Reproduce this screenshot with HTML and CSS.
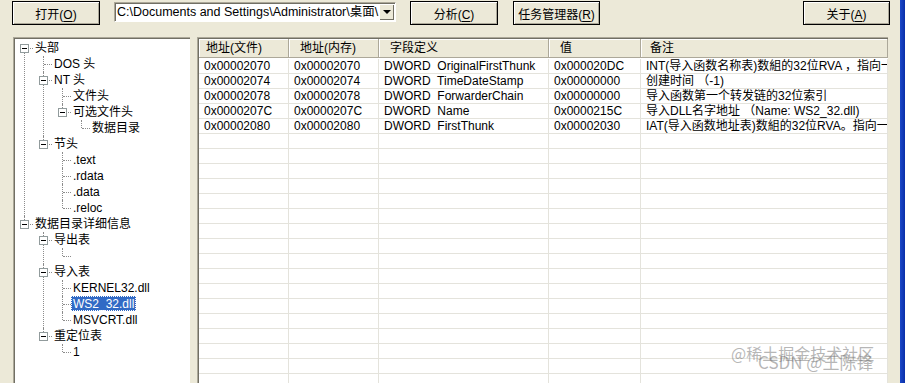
FILE: index.html
```html
<!DOCTYPE html>
<html lang="zh">
<head>
    <meta charset="UTF-8">
    <meta name="viewport" content="width=device-width, initial-scale=1.0">
    <title>PE查看器</title>
    <link rel="stylesheet" href="styles.css">
</head>
<body>
  <div class="app">
    <div class="toolbar">
      <button class="btn btn-open">打开(<u>O</u>)</button>
      <div class="combo">
        <span class="combo-text">C:\Documents and Settings\Administrator\桌面\</span>
        <span class="combo-arrow"></span>
      </div>
      <button class="btn btn-parse">分析(<u>C</u>)</button>
      <button class="btn btn-task">任务管理器(<u>R</u>)</button>
      <button class="btn btn-about">关于(<u>A</u>)</button>
    </div>

    <div class="main">
      <div class="tree">
        <ul>
          <li>
            <div class="node"><span class="toggle"></span>头部</div>
            <ul>
              <li><div class="node">DOS 头</div></li>
              <li>
                <div class="node"><span class="toggle"></span>NT 头</div>
                <ul>
                  <li><div class="node">文件头</div></li>
                  <li>
                    <div class="node"><span class="toggle"></span>可选文件头</div>
                    <ul>
                      <li><div class="node">数据目录</div></li>
                    </ul>
                  </li>
                </ul>
              </li>
              <li>
                <div class="node"><span class="toggle"></span>节头</div>
                <ul>
                  <li><div class="node">.text</div></li>
                  <li><div class="node">.rdata</div></li>
                  <li><div class="node">.data</div></li>
                  <li><div class="node">.reloc</div></li>
                </ul>
              </li>
            </ul>
          </li>
          <li>
            <div class="node"><span class="toggle"></span>数据目录详细信息</div>
            <ul>
              <li>
                <div class="node"><span class="toggle"></span>导出表</div>
                <ul>
                  <li><div class="node"></div></li>
                </ul>
              </li>
              <li>
                <div class="node"><span class="toggle"></span>导入表</div>
                <ul>
                  <li><div class="node">KERNEL32.dll</div></li>
                  <li><div class="node"><span class="sel">WS2_32.dll</span></div></li>
                  <li><div class="node">MSVCRT.dll</div></li>
                </ul>
              </li>
              <li>
                <div class="node"><span class="toggle"></span>重定位表</div>
                <ul>
                  <li><div class="node">1</div></li>
                </ul>
              </li>
            </ul>
          </li>
        </ul>
      </div>

      <div class="list">
        <div class="grid">
          <div class="th first">地址(文件)</div>
          <div class="th">地址(内存)</div>
          <div class="th">字段定义</div>
          <div class="th">值</div>
          <div class="th last">备注</div>
        </div>
        <div class="grid rows" id="rows">
          <div>0x00002070</div><div>0x00002070</div><div>DWORD  OriginalFirstThunk</div><div>0x000020DC</div><div>INT(导入函数名称表)数組的32位RVA ，指向一个IMAGE_THUNK_DATA数组</div>
          <div>0x00002074</div><div>0x00002074</div><div>DWORD  TimeDateStamp</div><div>0x00000000</div><div>创建时间 （-1)</div>
          <div>0x00002078</div><div>0x00002078</div><div>DWORD  ForwarderChain</div><div>0x00000000</div><div>导入函数第一个转发链的32位索引</div>
          <div>0x0000207C</div><div>0x0000207C</div><div>DWORD  Name</div><div>0x0000215C</div><div>导入DLL名字地址 （Name: WS2_32.dll)</div>
          <div>0x00002080</div><div>0x00002080</div><div>DWORD  FirstThunk</div><div>0x00002030</div><div>IAT(导入函数地址表)数組的32位RVA。指向一个IMAGE_THUNK_DATA数组</div>
        </div>
      </div>
    </div>
  </div>
  <div class="edge"></div>

  <div class="mark">
    <span class="mark-a">@稀土掘金技术社区</span>
    <span class="mark-b">CSDN @王陈锋</span>
  </div>

  <script>
    // fill the rest of the list with empty rows
    const rows = document.getElementById("rows");
    for (let i = 0; i < 18 * 5; i++) {
      rows.appendChild(document.createElement("div"));
    }
  </script>
</body>
</html>
```

FILE: styles.css
```css
* {
  margin: 0;
  padding: 0;
  box-sizing: border-box;
}

body {
  width: 905px;
  height: 383px;
  overflow: hidden;
  display: flex;
  background-color: #ece9d8;
  font-family: "Liberation Sans", "Noto Sans CJK SC", sans-serif;
  font-size: 12px;
  color: #000;
  position: relative;
}

.app {
  flex: 1;
  display: flex;
  flex-direction: column;
  min-width: 0;
}

.edge {
  width: 5px;
  background: linear-gradient(to right, #1b48c9, #0a2fa8);
}

/* toolbar */
.toolbar {
  display: flex;
  align-items: flex-start;
  height: 37px;
  padding-top: 1px;
}

.btn {
  height: 24px;
  border: 1px solid #000;
  background-color: #ece9d8;
  box-shadow: inset 1px 1px #fff, inset -1px -1px #aca899;
  font-family: "Liberation Sans", "Noto Sans CJK SC", sans-serif;
  font-size: 12px;
  color: #000;
}

.btn u {
  text-underline-offset: 2px;
}

.btn-open {
  margin-left: 12px;
  width: 88px;
}

.btn-parse {
  margin-left: 14px;
  width: 88px;
}

.btn-task {
  margin-left: 15px;
  width: 87px;
}

.btn-about {
  margin-left: auto;
  margin-right: 10px;
  width: 87px;
}

.combo {
  margin-left: 14px;
  margin-top: 1px;
  width: 282px;
  height: 20px;
  display: flex;
  background-color: #fff;
  border-top: 1px solid #aca899;
  border-left: 1px solid #aca899;
  border-right: 1px solid #fff;
  border-bottom: 1px solid #fff;
  box-shadow: inset 1px 1px #716f64;
}

.combo-text {
  flex: 1;
  overflow: hidden;
  white-space: nowrap;
  line-height: 18px;
  padding-left: 2px;
  font-size: 12.5px;
}

.combo-arrow {
  width: 15px;
  height: 16px;
  margin: 1px 1px 1px 0;
  background-color: #ece9d8;
  box-shadow: inset 1px 1px #fff, inset -1px -1px #716f64;
  position: relative;
}

.combo-arrow::after {
  content: "";
  position: absolute;
  left: 4px;
  top: 6px;
  border-left: 4px solid transparent;
  border-right: 4px solid transparent;
  border-top: 4px solid #000;
}

/* main area */
.main {
  flex: 1;
  display: flex;
  gap: 7px;
  padding-left: 13px;
  min-height: 0;
}

.tree,
.list {
  height: 380px;
  background-color: #fff;
  border-top: 1px solid #aca899;
  border-left: 1px solid #aca899;
  box-shadow: inset 1px 1px #716f64;
  overflow: hidden;
}

.tree {
  width: 177px;
  padding: 2px 0 0 1px;
}

.list {
  width: 691px;
  padding: 1px 0 0 1px;
}

/* tree view */
.tree ul {
  list-style: none;
}

.tree ul ul {
  margin-left: 19px;
}

.tree li {
  position: relative;
}

.tree li::before {
  content: "";
  position: absolute;
  left: 9px;
  top: 0;
  bottom: 0;
  border-left: 1px dotted #8c8c8c;
}

.tree li:last-child::before {
  bottom: auto;
  height: 8px;
}

.tree > ul > li:first-child::before {
  top: 8px;
}

.node {
  position: relative;
  height: 16px;
  line-height: 16px;
  padding-left: 20px;
  white-space: nowrap;
}

.node::after {
  content: "";
  position: absolute;
  left: 10px;
  top: 8px;
  width: 8px;
  border-top: 1px dotted #8c8c8c;
}

.toggle {
  position: absolute;
  left: 5px;
  top: 4px;
  width: 9px;
  height: 9px;
  border: 1px solid #919b9c;
  background-color: #fff;
  z-index: 1;
}

.toggle::after {
  content: "";
  position: absolute;
  left: 1px;
  right: 1px;
  top: 3px;
  height: 1px;
  background-color: #000;
}

.sel {
  display: inline-block;
  height: 15px;
  line-height: 14px;
  margin-left: -2px;
  padding: 0 1px;
  background-color: #316ac5;
  color: #fff;
  outline: 1px dotted #fff;
  outline-offset: -1px;
  border: 1px dotted #000;
}

/* list view */
.grid {
  display: grid;
  grid-template-columns: 90px 90px 170px 92px 247px;
}

.th {
  height: 19px;
  line-height: 18px;
  padding-left: 11px;
  background-color: #ece9d8;
  border-right: 1px solid #aca899;
  border-bottom: 1px solid #aca899;
  box-shadow: inset 1px 1px #fff;
  white-space: nowrap;
}

.th.first {
  padding-left: 7px;
}

.th.last {
  padding-left: 9px;
}

.rows {
  padding-top: 1px;
}

.rows div {
  height: 15px;
  line-height: 15px;
  padding-left: 5px;
  border-right: 1px solid #e4e3dc;
  border-bottom: 1px solid #e4e3dc;
  white-space: pre;
  overflow: hidden;
}

/* watermark */
.mark {
  position: absolute;
  left: 731px;
  top: 343px;
  width: 160px;
  height: 32px;
  font-family: "Noto Sans CJK SC", sans-serif;
  font-size: 16px;
  color: rgba(110, 110, 110, 0.5);
}

.mark span {
  position: absolute;
  white-space: nowrap;
  line-height: 20px;
}

.mark-a {
  left: 0;
  top: 0;
}

.mark-b {
  left: 27px;
  top: 9px;
  font-size: 17px;
}
```
